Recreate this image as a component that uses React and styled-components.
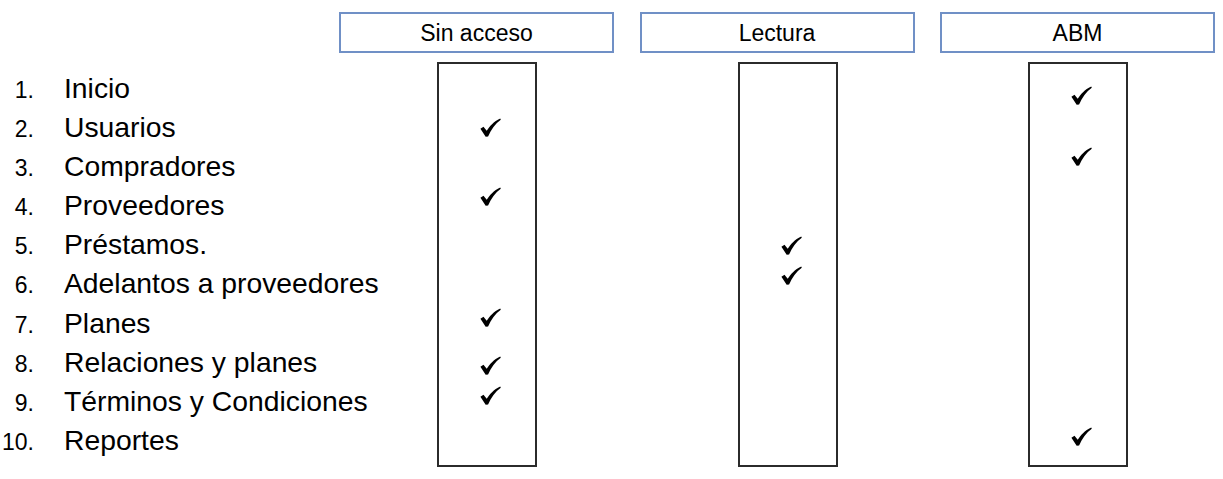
import React from "react";
import styled, { createGlobalStyle } from "styled-components";

const GlobalStyle = createGlobalStyle`
  html, body {
    margin: 0;
    padding: 0;
    background: #ffffff;
  }
  body {
    font-family: "Liberation Sans", Arial, sans-serif;
    color: #000000;
  }
`;

const modules = [
  "Inicio",
  "Usuarios",
  "Compradores",
  "Proveedores",
  "Préstamos.",
  "Adelantos a proveedores",
  "Planes",
  "Relaciones y planes",
  "Términos y Condiciones",
  "Reportes",
];

// check centers, in px from the top of each box
const columns = [
  { title: "Sin acceso", inset: 98, shift: 3, checks: [63, 132, 253, 301, 331] },
  { title: "Lectura", inset: 98, shift: 4, checks: [181, 211] },
  { title: "ABM", inset: 88, shift: 3, checks: [31, 92, 372] },
];

const CHECK_H = 19;

const Check = () => (
  <svg width="21" height={CHECK_H} viewBox="0 0 20 18">
    <path
      d="M0.4 10.2 L3.3 8.2 L6.4 12.2 C9 7.8 13 3.4 19.3 0.4 L19.8 1.5 C14.5 5.2 10.6 10.6 7.7 17.6 L5.4 17.8 Z"
      fill="#000"
    />
  </svg>
);

const App = () => {
  return (
    <>
      <GlobalStyle />
      <Page>
        <Corner />
        {columns.map((col) => (
          <HeaderBox key={col.title}>{col.title}</HeaderBox>
        ))}

        <List>
          {modules.map((name, i) => (
            <Item key={name}>
              <Num>{i + 1}.</Num>
              <Label>{name}</Label>
            </Item>
          ))}
        </List>

        {columns.map((col) => {
          let prev = 0;
          return (
            <Cell key={col.title}>
              <Box $inset={col.inset}>
                {col.checks.map((c) => {
                  const top = c - CHECK_H / 2 - prev;
                  prev = c + CHECK_H / 2;
                  return (
                    <Mark key={c} $shift={col.shift} style={{ marginTop: top }}>
                      <Check />
                    </Mark>
                  );
                })}
              </Box>
            </Cell>
          );
        })}
      </Page>
    </>
  );
};

// Styled Components
const Page = styled.div`
  display: grid;
  grid-template-columns: 313.5px 275px 275px 275px;
  grid-template-rows: 41px 405px;
  column-gap: 25.5px;
  row-gap: 9px;
  padding-top: 12px;
  width: 1223px;
`;

const Corner = styled.div``;

const HeaderBox = styled.div`
  box-sizing: border-box;
  border: 2px solid #7090c6;
  display: flex;
  align-items: center;
  justify-content: center;
  font-size: 23px;
  padding-top: 1px;
`;

const List = styled.ol`
  list-style: none;
  margin: 7px 0 0;
  padding: 0;
  white-space: nowrap;
  min-width: 0;
  overflow: visible;
`;

const Item = styled.li`
  display: flex;
  align-items: baseline;
  height: 39.1px;
  line-height: 39.1px;
`;

const Num = styled.span`
  flex: 0 0 34px;
  text-align: right;
  font-size: 23px;
  margin-right: 30px;
`;

const Label = styled.span`
  flex-shrink: 0;
  font-size: 28.3px;
`;

const Cell = styled.div`
  display: flex;
`;

const Box = styled.div`
  box-sizing: border-box;
  width: 100px;
  height: 405px;
  margin-left: ${(p) => p.$inset}px;
  border: 2px solid #2b2b2b;
  display: flex;
  flex-direction: column;
  align-items: center;
`;

const Mark = styled.div`
  height: ${CHECK_H}px;
  margin-left: ${(p) => p.$shift * 2}px;
  display: flex;

  svg {
    display: block;
  }
`;

export default App;
